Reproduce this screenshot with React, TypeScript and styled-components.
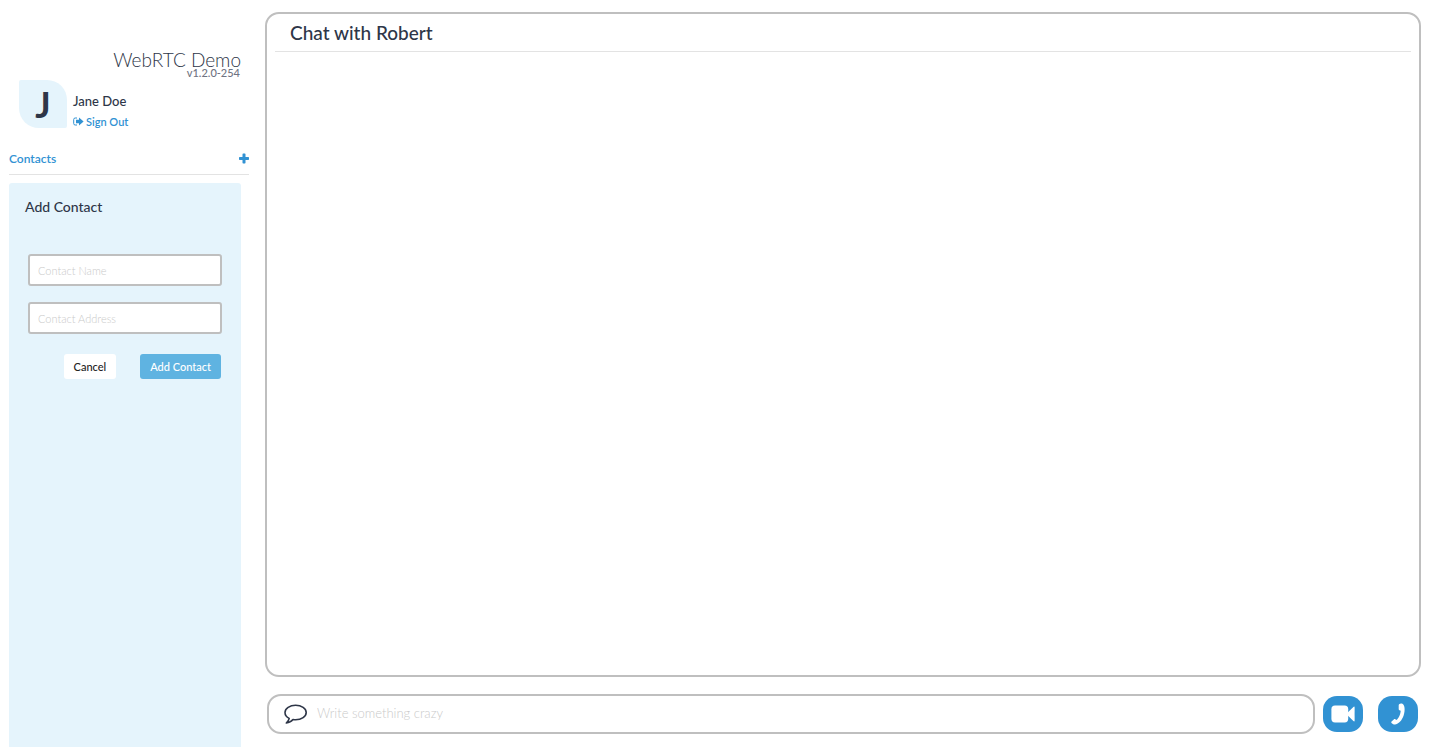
import React from "react";
import styled, { createGlobalStyle } from "styled-components";

const color = {
  ink: "#2e3648",
  muted: "#6f7382",
  blue: "#3192d3",
  softBlue: "#5fb3e1",
  pale: "#e5f4fc",
  line: "#e3e3e3",
  border: "#bfbfbf",
  placeholder: "#cacaca",
};

const GlobalStyle = createGlobalStyle`
  *, *::before, *::after { box-sizing: border-box; }
  body {
    margin: 0;
    background: #fff;
    color: ${color.ink};
    font-family: Lato, "Open Sans", sans-serif;
    font-weight: 500;
  }
  h1, h2, h3, p { margin: 0; }
  button, input { font-family: inherit; }
  svg { display: block; fill: currentColor; }
`;

const Page = styled.div`
  display: flex;
  min-height: 100vh;
`;

const Sidebar = styled.aside`
  display: flex;
  flex-direction: column;
  flex: 0 0 249px;
  padding-left: 9px;
`;

const Brand = styled.header`
  padding: 52px 8px 2px 0;
  text-align: right;
`;

const BrandName = styled.h1`
  font-size: 19px;
  font-weight: 300;
  line-height: 16px;
`;

const Version = styled.p`
  padding-right: 1px;
  color: ${color.muted};
  font-size: 11px;
  line-height: 10px;
`;

const Profile = styled.section`
  display: flex;
  gap: 6px;
  padding-left: 10px;
`;

const Avatar = styled.div`
  width: 48px;
  height: 48px;
  border-radius: 2px 20px 2px 20px;
  background: ${color.pale};
  font-size: 36px;
  font-weight: 700;
  line-height: 48px;
  text-align: center;
`;

const ProfileText = styled.div`
  display: flex;
  flex-direction: column;
  align-items: flex-start;
  gap: 3px;
  padding-top: 11px;
`;

const UserName = styled.p`
  font-size: 13px;
  line-height: 20px;
`;

const SignOut = styled.a`
  display: flex;
  align-items: center;
  gap: 2px;
  color: ${color.blue};
  font-size: 11px;
  font-weight: 600;
  line-height: 16px;
  text-decoration: none;
`;

const ContactsBar = styled.div`
  display: flex;
  align-items: center;
  justify-content: space-between;
  height: 31px;
  margin-top: 14px;
  border-bottom: 1px solid ${color.line};
`;

const ContactsTitle = styled.h2`
  color: ${color.blue};
  font-size: 12px;
  font-weight: 600;
  line-height: 16px;
`;

const PlusButton = styled.button`
  padding: 0;
  border: 0;
  background: none;
  color: ${color.blue};
  cursor: pointer;
`;

const ContactForm = styled.form`
  display: flex;
  flex: 1;
  flex-direction: column;
  gap: 16px;
  margin: 8px 8px 0 0;
  padding: 14px 19px;
  border-radius: 3px 3px 0 0;
  background: ${color.pale};
`;

const FormTitle = styled.h3`
  margin: 0 -3px 21px;
  font-size: 14px;
  font-weight: 500;
  line-height: 20px;
`;

const Field = styled.input`
  width: 100%;
  height: 32px;
  padding: 0 8px;
  border: 2px solid ${color.border};
  border-radius: 3px;
  background: #fff;
  color: ${color.ink};
  font-size: 11px;
  font-weight: 300;
  &::placeholder { color: ${color.placeholder}; opacity: 1; }
`;

const FormActions = styled.div`
  display: flex;
  justify-content: flex-end;
  gap: 24px;
  padding: 4px 1px 0 0;
`;

const FormButton = styled.button<{ $primary?: boolean }>`
  height: 25px;
  padding: 0 10px;
  border: 0;
  border-radius: 3px;
  background: ${(p) => (p.$primary ? color.softBlue : "#fff")};
  color: ${(p) => (p.$primary ? "#fff" : "#222")};
  font-size: 11px;
  font-weight: 500;
  cursor: pointer;
`;

const Main = styled.main`
  display: flex;
  flex: 1;
  flex-direction: column;
  gap: 17px;
  min-width: 0;
  padding: 12px 10px 13px 16px;
`;

const ChatPanel = styled.section`
  flex: 1;
  padding: 0 8px;
  border: 2px solid ${color.border};
  border-radius: 14px;
`;

const ChatTitle = styled.h2`
  height: 38px;
  padding: 0 15px;
  border-bottom: 1px solid ${color.line};
  font-size: 19px;
  font-weight: 500;
  line-height: 38px;
`;

const Composer = styled.form`
  display: flex;
  align-items: center;
  padding: 0 3px 0 2px;
`;

const MessageBox = styled.label`
  display: flex;
  flex: 1;
  align-items: center;
  gap: 9px;
  height: 40px;
  margin-right: 8px;
  padding: 0 15px;
  border: 2px solid ${color.border};
  border-radius: 14px;
`;

const MessageInput = styled.input`
  flex: 1;
  min-width: 0;
  padding: 0 0 2px;
  border: 0;
  outline: 0;
  color: ${color.ink};
  font-size: 13px;
  font-weight: 300;
  &::placeholder { color: ${color.placeholder}; opacity: 1; }
`;

const CallButton = styled.button`
  display: flex;
  align-items: center;
  justify-content: center;
  width: 40px;
  height: 36px;
  padding: 0;
  border: 0;
  border-radius: 14px;
  background: ${color.blue};
  color: #fff;
  cursor: pointer;
  & + & { margin-left: 15px; }
`;

const SignOutIcon = () => (
  <svg width="11" height="10" viewBox="0 0 11 10" aria-hidden="true">
    <path d="M4 1H2.2Q.7 1 .7 2.5v4Q.7 8 2.2 8H4" fill="none" stroke="currentColor" strokeWidth="1" />
    <path d="M6 .6 10.6 4.5 6 8.4V6.2H3V2.8h3z" />
  </svg>
);

const PlusIcon = () => (
  <svg width="10" height="12" viewBox="0 0 10 12" aria-hidden="true">
    <path d="M3.5 1.2Q3.5.5 4.2.5h1.6Q6.5.5 6.5 1.2V4h2.8q.7 0 .7.7v1.6q0 .7-.7.7H6.5v2.8q0 .7-.7.7H4.2q-.7 0-.7-.7V7H.7Q0 7 0 6.3V4.7Q0 4 .7 4h2.8z" />
  </svg>
);

const BubbleIcon = () => (
  <svg width="24" height="20" viewBox="0 0 24 20" aria-hidden="true">
    <path
      d="M11.600 1.300C5.800 1.300 1 4.400 1 8.500c0 2.500 1.600 4.600 4.200 5.900C4.900 16.400 3.800 17.800 2.300 19c2.900-.2 5.200-1.500 6.700-3.400.8.100 1.700.2 2.600.2 5.900 0 10.600-3.200 10.600-7.300s-4.700-7.200-10.600-7.200z"
      fill="none"
      stroke="currentColor"
      strokeWidth="1.6"
      strokeLinejoin="round"
    />
  </svg>
);

const VideoIcon = () => (
  <svg width="24" height="18" viewBox="0 0 24 18" aria-hidden="true">
    <rect x=".4" y=".6" width="16.8" height="16.8" rx="3.6" />
    <path d="M17 7.300 22.400 2q1.200-1 1.200.6v12.800q0 1.600-1.200.6L17 10.700z" />
  </svg>
);

const PhoneIcon = () => (
  <svg width="14" height="22" viewBox="0 0 14 22" aria-hidden="true">
    <path d="M8.100 1.300C9.200.2 11.500.3 12.500 1.700c1.800 2.700 1.300 8.600-.7 12.800-1.700 3.800-4.700 6.600-7.800 6.900-1.400.1-2.700-.6-3.500-1.500-.4-.5-.3-1 .1-1.400l2.200-2.100c.5-.5 1-.5 1.500-.2l1.100.8c2-1.200 4.200-5.800 4.300-9.300L8.400 7.200c-.5-.2-.7-.5-.7-1V2.200c0-.4.100-.6.400-.9z" />
  </svg>
);

export default function App() {
  return (
    <>
      <GlobalStyle />
      <Page>
        <Sidebar>
          <Brand>
            <BrandName>WebRTC Demo</BrandName>
            <Version>v1.2.0-254</Version>
          </Brand>
          <Profile>
            <Avatar>J</Avatar>
            <ProfileText>
              <UserName>Jane Doe</UserName>
              <SignOut href="#signout">
                <SignOutIcon />
                Sign Out
              </SignOut>
            </ProfileText>
          </Profile>
          <ContactsBar>
            <ContactsTitle>Contacts</ContactsTitle>
            <PlusButton type="button" aria-label="Add a contact">
              <PlusIcon />
            </PlusButton>
          </ContactsBar>
          <ContactForm onSubmit={(e) => e.preventDefault()}>
            <FormTitle>Add Contact</FormTitle>
            <Field type="text" placeholder="Contact Name" aria-label="Contact Name" />
            <Field type="text" placeholder="Contact Address" aria-label="Contact Address" />
            <FormActions>
              <FormButton type="button">Cancel</FormButton>
              <FormButton type="submit" $primary>
                Add Contact
              </FormButton>
            </FormActions>
          </ContactForm>
        </Sidebar>
        <Main>
          <ChatPanel>
            <ChatTitle>Chat with Robert</ChatTitle>
          </ChatPanel>
          <Composer onSubmit={(e) => e.preventDefault()}>
            <MessageBox>
              <BubbleIcon />
              <MessageInput type="text" placeholder="Write something crazy" aria-label="Message" />
            </MessageBox>
            <CallButton type="button" aria-label="Start video call">
              <VideoIcon />
            </CallButton>
            <CallButton type="button" aria-label="Start voice call">
              <PhoneIcon />
            </CallButton>
          </Composer>
        </Main>
      </Page>
    </>
  );
}
